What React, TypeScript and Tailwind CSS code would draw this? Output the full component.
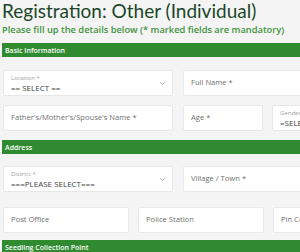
import { ChevronDown } from "lucide-react";

const font = { fontFamily: '"Open Sans", "Noto Sans", sans-serif' };

const SectionBar = ({ title }: { title: string }) => (
  <div className="h-[14px] bg-[#2f8a30] pl-[3px] flex items-center text-[7px] font-semibold text-white leading-none">
    {title}
  </div>
);

const Field = ({ placeholder, width }: { placeholder: string; width: string }) => (
  <div
    className={`${width} h-[26px] shrink-0 bg-white border border-[#e8e8e8] rounded-[2px] flex items-center px-[7px] text-[7.6px] text-[#707070]`}
  >
    {placeholder}
  </div>
);

const SelectField = ({
  label,
  value,
  width,
  chevron = true,
}: {
  label: string;
  value: string;
  width: string;
  chevron?: boolean;
}) => (
  <div
    className={`${width} h-[26px] shrink-0 bg-white border border-[#e8e8e8] rounded-[2px] flex items-center pl-[7px] pr-[6px]`}
  >
    <div className="flex-1 flex flex-col leading-none">
      <span className="text-[6px] text-[#a0a0a0]">{label}</span>
      <span className="text-[8px] text-[#444] mt-[3px]">{value}</span>
    </div>
    {chevron && <ChevronDown size={7} strokeWidth={2} className="text-[#666]" />}
  </div>
);

export default function App() {
  return (
    <div className="w-[300px] h-[252px] overflow-hidden bg-[#f4f4f4]" style={font}>
      <div className="w-[420px] pl-[2px]">
        <h1
          className="text-[19px] leading-[22px] text-[#1c4629] whitespace-nowrap"
          style={{ fontFamily: 'Lato, sans-serif' }}
        >
          Registration: Other (Individual)
        </h1>
        <p className="text-[9.3px] font-semibold text-[#3c933c] leading-[13px] mt-[1px] whitespace-nowrap">
          Please fill up the details below (* marked fields are mandatory)
        </p>

        <div className="mt-[7px]">
          <SectionBar title="Basic Information" />
        </div>
        <div className="pl-[1px] pt-[13px] flex flex-col gap-[9px]">
          <div className="flex gap-[10px]">
            <SelectField label="Location *" value="== SELECT ==" width="w-[170px]" />
            <Field placeholder="Full Name *" width="w-[200px]" />
          </div>
          <div className="flex gap-[9px]">
            <Field placeholder="Father's/Mother's/Spouse's Name *" width="w-[170px] mr-[1px]" />
            <Field placeholder="Age *" width="w-[80px]" />
            <SelectField label="Gender *" value="=SELECT=" width="w-[100px]" chevron={false} />
          </div>
        </div>

        <div className="mt-[9px]">
          <SectionBar title="Address" />
        </div>
        <div className="pl-[1px] pt-[12px] flex flex-col gap-[15px]">
          <div className="flex gap-[10px]">
            <SelectField label="District *" value="===PLEASE SELECT===" width="w-[170px]" />
            <Field placeholder="Village / Town *" width="w-[200px]" />
          </div>
          <div className="flex gap-[9px]">
            <Field placeholder="Post Office" width="w-[126px]" />
            <Field placeholder="Police Station" width="w-[126px]" />
            <Field placeholder="Pin Code" width="w-[126px]" />
          </div>
        </div>

        <div className="mt-[7px]">
          <SectionBar title="Seedling Collection Point" />
        </div>
      </div>
    </div>
  );
}
